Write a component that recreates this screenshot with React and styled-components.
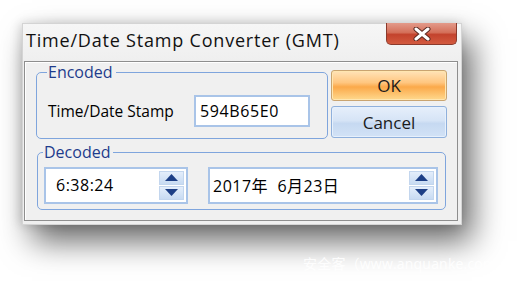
import styled, { createGlobalStyle } from "styled-components"

const Global = createGlobalStyle`
    html, body {
        margin: 0;
        padding: 0;
        background: #ffffff;
    }
    body {
        font-family: "Open Sans", "Noto Sans CJK SC", sans-serif;
        color: #000;
    }
`

const Page = styled.div`
    width: 519px;
    height: 281px;
    overflow: hidden;
    padding: 23px 0 0 22px;
    box-sizing: border-box;
`

const Dialog = styled.div`
    width: 440px;
    height: 202px;
    box-sizing: border-box;
    background: #efefef;
    border: 1px solid #d4d4d4;
    box-shadow: 10px 16px 30px rgba(0, 0, 0, 0.6), -2px 0 10px rgba(0, 0, 0, 0.15);
    display: flex;
    flex-direction: column;
`

const TitleBar = styled.div`
    height: 37px;
    display: flex;
    align-items: flex-start;
    background: linear-gradient(#f6f6f6, #efefef);
`

const Title = styled.div`
    font-size: 18px;
    padding: 4px 0 0 3px;
    letter-spacing: 0.8px;
    color: #111;
`

const CloseButton = styled.div`
    margin-left: auto;
    margin-right: 4px;
    margin-top: -1px;
    width: 71px;
    height: 22px;
    box-sizing: border-box;
    border: 1px solid #8a3a2c;
    border-top: none;
    border-radius: 0 0 5px 5px;
    background: linear-gradient(#e39a8a 0%, #d4705a 45%, #c3432d 55%, #d35a3f 100%);
    display: flex;
    align-items: center;
    justify-content: center;
`

const Client = styled.div`
    margin: 0 3px 3px 1px;
    flex: 1;
    border: 1px solid #8e8e8e;
    box-shadow: inset 1px 1px 0 #ffffff;
    background: #f0f0f0;
    padding: 2px 10px 0 11px;
    display: flex;
    flex-direction: column;
`

const TopRow = styled.div`
    display: flex;
    align-items: flex-start;
`

const Group = styled.fieldset`
    margin: 0;
    padding: 0 ${p => p.$pr}px 0 ${p => p.$pl}px;
    width: ${p => p.$w}px;
    height: ${p => p.$h}px;
    box-sizing: border-box;
    border: 1px solid #7fa5dd;
    border-radius: 5px;
    display: flex;
    align-items: center;
    justify-content: space-between;
`

const Legend = styled.legend`
    font-size: 16px;
    line-height: 17px;
    color: #1e3c8c;
    padding: 0 3px 0 1px;
    margin-left: -1px;
`

const Label = styled.div`
    font-size: 15.5px;
    padding-top: 2px;
`

const TextInput = styled.div`
    width: 116px;
    height: 32px;
    box-sizing: border-box;
    border: 2px solid #a9c4e8;
    background: #fff;
    font-size: 16px;
    letter-spacing: 0.6px;
    padding: 3px 0 0 4px;
    margin-top: 2px;
`

const Buttons = styled.div`
    margin-left: 3px;
    margin-top: 6px;
    display: flex;
    flex-direction: column;
    gap: 5px;
`

const Button = styled.div`
    width: 116px;
    height: ${p => p.$h}px;
    box-sizing: border-box;
    border: 1px solid ${p => (p.$primary ? "#c9a470" : "#8fb0dc")};
    box-shadow: inset 0 0 0 1px ${p => (p.$primary ? "#ffe6b0" : "#e6f0fc")};
    border-radius: 3px;
    background: ${p =>
        p.$primary
            ? "linear-gradient(#ffe3b8 0%, #ffc680 40%, #fba94a 55%, #ffd98e 100%)"
            : "linear-gradient(#e6effb 0%, #d6e4f6 45%, #c6d9f1 55%, #d2e2f6 100%)"};
    display: flex;
    align-items: center;
    justify-content: center;
    font-size: 17px;
    color: #1b1b1b;
`

const DecodedRow = styled.div`
    margin-top: 5px;
    margin-left: 1px;
`

const Spinner = styled.div`
    width: ${p => p.$w}px;
    height: 37px;
    box-sizing: border-box;
    border: 2px solid #a9c4e8;
    background: #fff;
    display: flex;
    align-items: stretch;
    padding: 2px;
`

const SpinText = styled.div`
    flex: 1;
    font-size: 16px;
    letter-spacing: 0.5px;
    display: flex;
    align-items: center;
    padding-left: ${p => p.$pl}px;
    white-space: pre;
`

const SpinButtons = styled.div`
    width: 25px;
    display: flex;
    flex-direction: column;
    gap: 1px;
    background: #fff;
`

const SpinHalf = styled.div`
    flex: 1;
    background: linear-gradient(#e4eefb, #c8dbf2);
    border: 1px solid #c3d6ee;
    display: flex;
    align-items: center;
    justify-content: center;
`

const Watermark = styled.div`
    margin: 28px 0 0 281px;
    font-size: 14px;
    color: rgba(255, 255, 255, 0.9);
    letter-spacing: 0.2px;
`

const Arrow = ({ up }) => (
    <svg width="13" height="7" viewBox="0 0 13 7">
        <polygon points={up ? "6.5,0 13,7 0,7" : "0,0 13,0 6.5,7"} fill="#1d3f86" />
    </svg>
)

const SpinBox = ({ width, text, pl }) => (
    <Spinner $w={width}>
        <SpinText $pl={pl}>{text}</SpinText>
        <SpinButtons>
            <SpinHalf><Arrow up /></SpinHalf>
            <SpinHalf><Arrow /></SpinHalf>
        </SpinButtons>
    </Spinner>
)

const CloseX = () => (
    <svg width="18" height="14" viewBox="0 0 18 14">
        <path d="M3 2 L15 12 M15 2 L3 12" stroke="#5a2a22" strokeWidth="5" strokeLinecap="round" />
        <path d="M3 2 L15 12 M15 2 L3 12" stroke="#ffffff" strokeWidth="3" strokeLinecap="round" />
    </svg>
)

const App = () => {
    return (
        <Page>
            <Global />
            <Dialog>
                <TitleBar>
                    <Title>Time/Date Stamp Converter (GMT)</Title>
                    <CloseButton><CloseX /></CloseButton>
                </TitleBar>
                <Client>
                    <TopRow>
                        <Group $w={292} $h={75} $pl={11} $pr={17}>
                            <Legend>Encoded</Legend>
                            <Label>Time/Date Stamp</Label>
                            <TextInput>594B65E0</TextInput>
                        </Group>
                        <Buttons>
                            <Button $primary $h={31}>OK</Button>
                            <Button $h={32}>Cancel</Button>
                        </Buttons>
                    </TopRow>
                    <DecodedRow>
                        <Group $w={409} $h={66} $pl={6} $pr={7}>
                            <Legend>Decoded</Legend>
                            <SpinBox width={144} text="6:38:24" pl={8} />
                            <SpinBox width={230} text="2017年  6月23日" pl={1} />
                        </Group>
                    </DecodedRow>
                </Client>
            </Dialog>
            <Watermark>安全客（www.anquanke.com）</Watermark>
        </Page>
    )
}

export default App
